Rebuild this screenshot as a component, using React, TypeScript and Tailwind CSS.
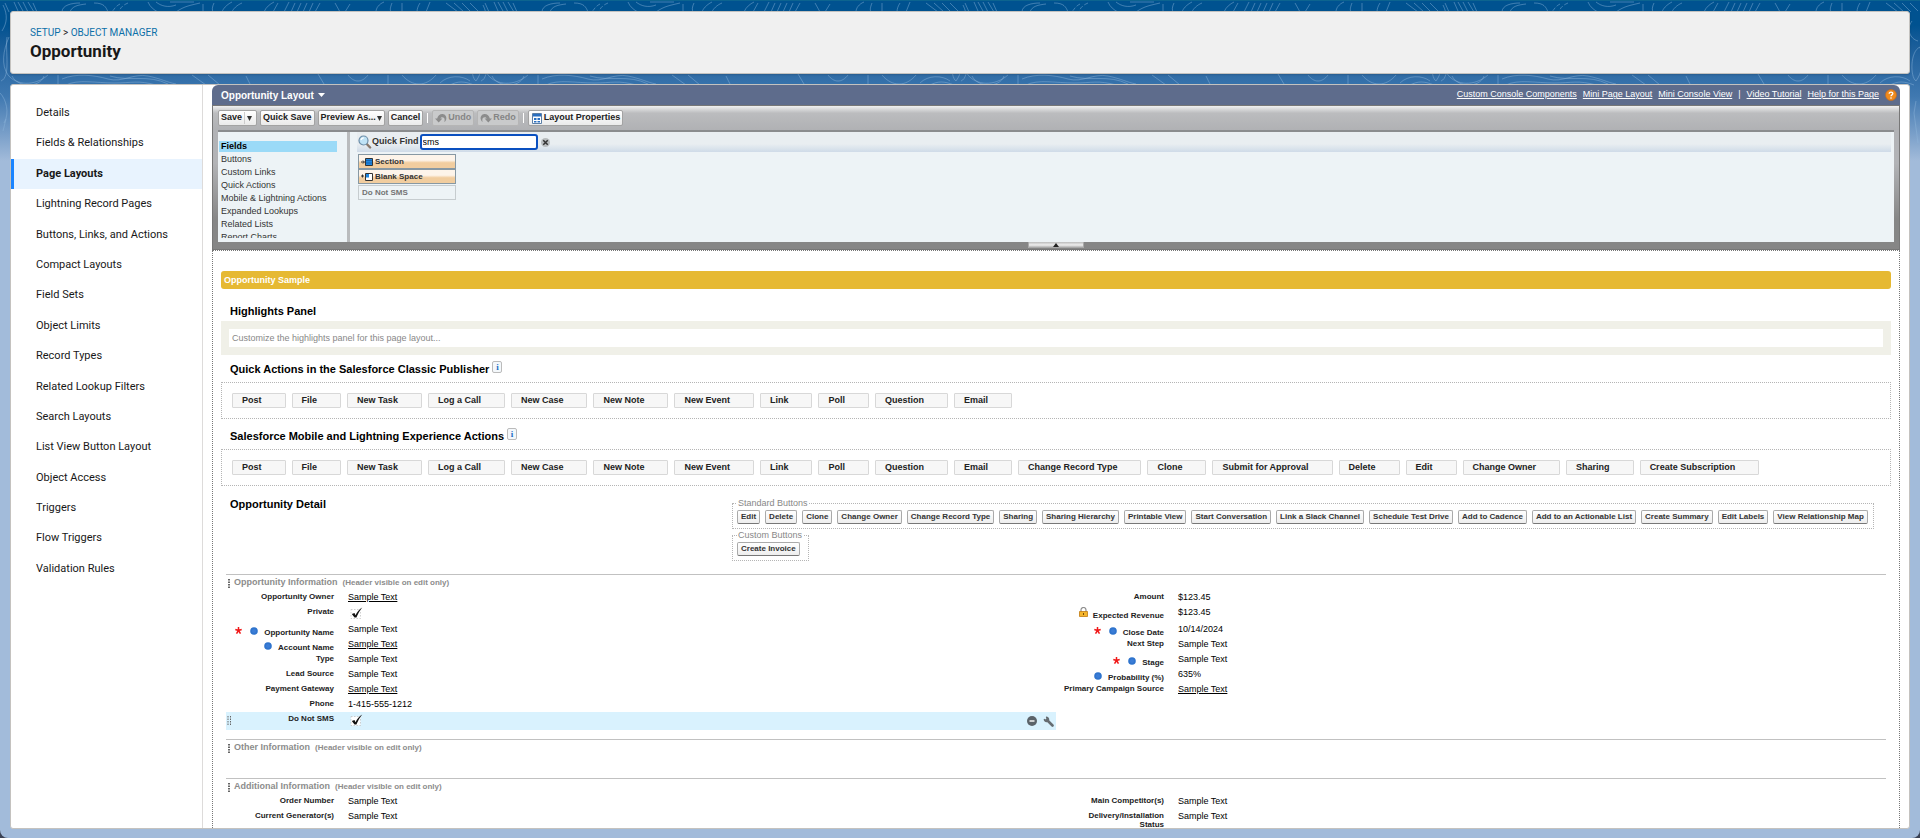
import { useState } from 'react';
import type { ReactNode } from 'react';
import { clsx } from 'clsx';

const NAV_ITEMS = [
  'Details',
  'Fields & Relationships',
  'Page Layouts',
  'Lightning Record Pages',
  'Buttons, Links, and Actions',
  'Compact Layouts',
  'Field Sets',
  'Object Limits',
  'Record Types',
  'Related Lookup Filters',
  'Search Layouts',
  'List View Button Layout',
  'Object Access',
  'Triggers',
  'Flow Triggers',
  'Validation Rules',
];

const CATEGORIES = [
  'Fields',
  'Buttons',
  'Custom Links',
  'Quick Actions',
  'Mobile & Lightning Actions',
  'Expanded Lookups',
  'Related Lists',
  'Report Charts',
];

const CLASSIC_ACTIONS = [
  'Post',
  'File',
  'New Task',
  'Log a Call',
  'New Case',
  'New Note',
  'New Event',
  'Link',
  'Poll',
  'Question',
  'Email',
];

const LIGHTNING_ACTIONS = [
  ...CLASSIC_ACTIONS,
  'Change Record Type',
  'Clone',
  'Submit for Approval',
  'Delete',
  'Edit',
  'Change Owner',
  'Sharing',
  'Create Subscription',
];

const STANDARD_BUTTONS = [
  'Edit',
  'Delete',
  'Clone',
  'Change Owner',
  'Change Record Type',
  'Sharing',
  'Sharing Hierarchy',
  'Printable View',
  'Start Conversation',
  'Link a Slack Channel',
  'Schedule Test Drive',
  'Add to Cadence',
  'Add to an Actionable List',
  'Create Summary',
  'Edit Labels',
  'View Relationship Map',
];

type Field = {
  label: string;
  value?: string;
  link?: boolean;
  check?: boolean;
  required?: boolean;
  always?: boolean;
  locked?: boolean;
  tall?: boolean;
  active?: boolean;
};

const INFO_LEFT: Field[] = [
  { label: 'Opportunity Owner', value: 'Sample Text', link: true },
  { label: 'Private', check: true, tall: true },
  { label: 'Opportunity Name', value: 'Sample Text', required: true, always: true },
  { label: 'Account Name', value: 'Sample Text', link: true, always: true },
  { label: 'Type', value: 'Sample Text' },
  { label: 'Lead Source', value: 'Sample Text' },
  { label: 'Payment Gateway', value: 'Sample Text', link: true },
  { label: 'Phone', value: '1-415-555-1212' },
  { label: 'Do Not SMS', check: true, active: true },
];

const INFO_RIGHT: Field[] = [
  { label: 'Amount', value: '$123.45' },
  { label: 'Expected Revenue', value: '$123.45', locked: true, tall: true },
  { label: 'Close Date', value: '10/14/2024', required: true, always: true },
  { label: 'Next Step', value: 'Sample Text' },
  { label: 'Stage', value: 'Sample Text', required: true, always: true },
  { label: 'Probability (%)', value: '635%', always: true },
  { label: 'Primary Campaign Source', value: 'Sample Text', link: true },
];

const EXTRA_LEFT: Field[] = [
  { label: 'Order Number', value: 'Sample Text' },
  { label: 'Current Generator(s)', value: 'Sample Text' },
];

const EXTRA_RIGHT: Field[] = [
  { label: 'Main Competitor(s)', value: 'Sample Text' },
  { label: 'Delivery/Installation Status', value: 'Sample Text' },
];

export default function App() {
  return (
    <div className="h-screen bg-[#3b4254]">
      <div className="relative flex h-full flex-col gap-[10px] overflow-hidden rounded-b-lg border-t border-[#0d648f] bg-[#a2bbda] px-[10px] pt-[10px] pb-[9px] font-['Liberation_Sans',Arial,sans-serif] text-black">
        <Backdrop />
        <PageHeader />
        <div className="relative flex min-h-0 flex-1 overflow-hidden rounded-[3px] border border-[#c4c2bf] bg-white">
          <SideNav />
          <div className="flex min-w-0 flex-1 flex-col px-[9px]">
            <Editor />
            <LayoutCanvas />
          </div>
        </div>
      </div>
    </div>
  );
}

// Contour-line strip behind the header, fading into the flat page blue
function Backdrop() {
  return (
    <div className="absolute inset-x-0 top-0 h-[160px] bg-linear-to-b from-[#005290] from-15% via-[#4079b1] via-60% to-[#a2bbda]">
      <svg className="h-full w-full" aria-hidden="true">
        <defs>
          <pattern id="contours" width="480" height="160" patternUnits="userSpaceOnUse">
            <g fill="none" stroke="#8fb6dd" strokeOpacity="0.45" strokeWidth="1">
              <path d="M5 2l4 9M14 1l4 9M18 1l5 9M23 1l5 10M28 1l6 10M33 2l4 9" />
              <path d="M62 11C62 4 72 2 80 2M70 11c2-6 8-7 16-8M94 2c10 0 12 4 14 9" />
              <path d="M120 3c-4 2-6 5-8 8M128 2c-5 2-8 5-9 9" strokeDasharray="4 2" />
              <path d="M148 1c2 5 6 8 10 10M156 1c5 4 12 6 20 3M170 1h24M176 11c8-6 16-7 24-9" />
              <path d="M203 3v8M214 2c-2 4-2 7-1 9M232 1c-6 3-9 7-10 10M242 2c-5 2-9 6-10 9" />
              <path d="M264 11c2-5 6-8 10-10M278 2l-5 9M289 1l-5 10M295 2l-4 9M301 2l-4 9M307 2l-4 9M313 2l-4 9M320 2l-5 9" />
              <path d="M335 2l5 9M350 3l-5 8M376 11c0-4 3-8 8-10M392 2c-2 5-2 7-1 9M402 2v9M420 2c-2 3-3 6-3 9M430 1l-4 10" />
              <path d="M446 2l12 9M454 2l10 9M462 2l9 9M470 2l8 8" />
              <path d="M2 30c5-8 6-16 1-26M1 80c10-4 4-30 6-44M9 36c-6 14-8 28-1 38 8 10 26 12 40 0" />
              <path d="M12 75c6 12 28 12 32 0M58 74v10" />
              <path d="M62 78c14-6 32-4 46 0s26-6 40-3 18 6 28 8M66 84c12-6 30-2 48-2s24-3 42 2M110 75c20 6 38-2 58 8" />
              <path d="M192 74l14 10M208 74l12 10M246 75l4 8M318 73l6 10M348 74c6 8 14 8 20 0M388 74v10" />
              <path d="M402 74c10 12 24 12 34 0M440 82c8-8 22-8 30-2M450 84c8-4 14-4 24 0" />
              <path d="M0 92c6 6 10 20 4 30M3 130l3-12M472 20c-6 8-2 18 6 20M480 46c-10 4-10 30-4 34 6-8 8-20 4-34M476 100l-2 12 4 30" />
            </g>
          </pattern>
        </defs>
        <rect width="100%" height="160" fill="url(#contours)" />
      </svg>
    </div>
  );
}

function PageHeader() {
  return (
    <header className="relative flex h-[63px] shrink-0 flex-col justify-center rounded-[3px] border border-[#c4c2bf] bg-[#f0f0f0] px-[19px] font-['Roboto','Liberation_Sans',sans-serif] shadow-[0_1px_2px_rgba(0,0,0,0.15)]">
      <nav className="text-[10px] leading-4 text-[#181818]">
        <a href="#setup" className="text-[#0b6fa8]">SETUP</a>
        {' > '}
        <a href="#object-manager" className="text-[#0b6fa8]">OBJECT MANAGER</a>
      </nav>
      <h1 className="text-[17px] leading-5 font-bold text-[#181818]">Opportunity</h1>
    </header>
  );
}

function SideNav() {
  return (
    <nav className="w-[192px] shrink-0 border-r border-[#dddbda] pt-[13px] font-['Roboto','Liberation_Sans',sans-serif] text-[11px] text-[#181818]">
      <ul className="flex h-[486px] flex-col justify-between">
        {NAV_ITEMS.map((item) => (
          <li key={item}>
            <a
              href="#nav"
              className={clsx(
                'block border-l-[3px] pl-[22px] leading-[30px]',
                item === 'Page Layouts' ? 'border-[#1b85ff] bg-[#e8f3fe] font-bold' : 'border-transparent',
              )}
            >
              {item}
            </a>
          </li>
        ))}
      </ul>
    </nav>
  );
}

function Editor() {
  return (
    <section className="shrink-0">
      <div className="flex h-5 items-center justify-between rounded-t-md bg-[#5e6c8c] pr-[3px] pl-[9px] text-white">
        <button type="button" className="flex items-center gap-1 text-[10px] font-bold">
          Opportunity Layout
          <svg width="7" height="4" viewBox="0 0 7 4" aria-hidden="true">
            <path d="M0 0h7L3.500 4z" fill="currentColor" />
          </svg>
        </button>
        <div className="flex items-center gap-[6px] text-[9px]">
          <a href="#console" className="underline">Custom Console Components</a>
          <a href="#mini-page" className="underline">Mini Page Layout</a>
          <a href="#mini-console" className="underline">Mini Console View</a>
          <span>|</span>
          <a href="#video" className="underline">Video Tutorial</a>
          <a href="#help" className="underline">Help for this Page</a>
          <svg width="12" height="12" viewBox="0 0 12 12" aria-hidden="true">
            <circle cx="6" cy="6" r="5.500" fill="#f08a1c" stroke="#c9691a" strokeWidth="0.600" />
            <path d="M4.200 4.700C4.200 2.500 7.900 2.600 7.800 4.700 7.700 5.900 6 5.900 6 7.200" fill="none" stroke="#fff" strokeWidth="1.300" />
            <circle cx="6" cy="9" r="0.800" fill="#fff" />
          </svg>
        </div>
      </div>

      <div className="border border-[#777] bg-linear-to-b from-[#b2b3b6] from-40% to-[#868686] to-80%">
        <Toolbar />
        <div className="mx-[5px] flex h-[112px] border-t-2 border-[#8a8c8e] bg-[#edf3f6]">
          <CategoryList />
          <Palette />
        </div>
        <div className="flex h-[7px] justify-center">
          <button
            type="button"
            aria-label="Collapse palette"
            className="flex h-[6px] w-[56px] items-center justify-center border-x border-[#aaa] bg-linear-to-b from-[#bbb] via-[#efefef] to-[#9a9a9a]"
          >
            <svg width="6" height="4" viewBox="0 0 6 4" aria-hidden="true">
              <path d="M3 0l3 4H0z" fill="#222" />
            </svg>
          </button>
        </div>
      </div>
    </section>
  );
}

function ToolButton({ children, disabled = false }: { children: ReactNode; disabled?: boolean }) {
  return (
    <button
      type="button"
      disabled={disabled}
      className={clsx(
        'flex h-4 items-center gap-px rounded-[2px] border px-[2px] text-[9px] font-bold',
        disabled
          ? 'border-[#b5b5b5] bg-[#c9cacb] text-[#858585]'
          : 'border-[#a3a3a3] bg-linear-to-b from-white to-[#eaeaea] text-[#222]',
      )}
    >
      {children}
    </button>
  );
}

function Caret() {
  return (
    <svg width="5" height="5" viewBox="0 0 5 5" aria-hidden="true">
      <path d="M0 0h5L2.500 5z" fill="#333" />
    </svg>
  );
}

function CurvedArrow({ flip = false }: { flip?: boolean }) {
  return (
    <svg width="12" height="10" viewBox="0 0 12 10" className={clsx(flip && '-scale-x-100')} aria-hidden="true">
      <path d="M0 5.500h2.200C2.600 2.500 5 .800 7.500.900c3 .200 4.500 3 3.700 5.600-.300 1-1 2-1.900 2.700.700-2.200.600-4.800-2-5-1.200 0-1.700.600-1.900 1.300h2L3.700 9.500z" fill="#8c8c8c" />
    </svg>
  );
}

function Toolbar() {
  return (
    <div className="flex h-6 items-center gap-[3px] bg-linear-to-b from-[#f0f0f0] via-[#bbbcbe] via-30% to-[#b0b1b4] px-[5px]">
      <ToolButton>
        Save
        <span className="ml-px flex h-3 items-center border-l border-[#ccc] px-[2px]">
          <Caret />
        </span>
      </ToolButton>
      <ToolButton>Quick Save</ToolButton>
      <ToolButton>
        Preview As...
        <Caret />
      </ToolButton>
      <ToolButton>Cancel</ToolButton>
      <span className="mx-px h-[10px] w-px bg-white" />
      <ToolButton disabled>
        <CurvedArrow />
        Undo
      </ToolButton>
      <ToolButton disabled>
        <CurvedArrow flip />
        Redo
      </ToolButton>
      <span className="mx-px h-[10px] w-px bg-white" />
      <ToolButton>
        <svg width="10" height="11" viewBox="0 0 10 11" className="mx-px" aria-hidden="true">
          <path d="M.500.500h9v10h-9z" fill="#fff" stroke="#5b7ea6" />
          <path d="M1 1h8v2.500H1z" fill="#2a6fc0" />
          <path d="M2 5h2.500v2H2zM5.500 5H8v2H5.500zM2 8h2.500v1.500H2zM5.500 8H8v1.500H5.500z" fill="#2a6fc0" />
        </svg>
        Layout Properties
      </ToolButton>
    </div>
  );
}

function CategoryList() {
  const [selected, setSelected] = useState('Fields');
  return (
    <div className="w-[132px] shrink-0 border-r-[3px] border-[#b9bbbd] pt-2 text-[9px] text-[#333]">
      <ul className="mr-[10px] ml-px h-[98px] overflow-hidden">
        {CATEGORIES.map((name) => (
          <li key={name} className="py-px">
            <button
              type="button"
              onClick={() => setSelected(name)}
              className={clsx(
                'block w-full pl-[2px] text-left leading-[11px]',
                name === selected && 'bg-[#9bdaf7] font-bold text-black',
              )}
            >
              {name}
            </button>
          </li>
        ))}
      </ul>
    </div>
  );
}

function Palette() {
  const [query, setQuery] = useState('sms');
  return (
    <div className="min-w-0 flex-1 pr-[3px] pl-[7px]">
      <div className="flex h-5 items-center bg-linear-to-b from-[#e9eef1] from-60% to-[#cfdbe8] pl-px">
        <svg width="14" height="14" viewBox="0 0 14 14" aria-hidden="true">
          <path d="M8.300 8.500l3.800 4" stroke="#8a7a6c" strokeWidth="2.400" strokeLinecap="round" />
          <circle cx="5.500" cy="5.500" r="4.500" fill="#bfe3f6" stroke="#6d8ea8" strokeWidth="1.200" />
          <path d="M3 5c.300-1.400 1.400-2.200 2.800-2.200" fill="none" stroke="#fff" strokeWidth="1.200" />
        </svg>
        <label htmlFor="quick-find" className="pr-px text-[9px] font-bold text-[#333]">
          Quick Find
        </label>
        <input
          id="quick-find"
          type="text"
          value={query}
          onChange={(e) => setQuery(e.target.value)}
          className="h-4 w-[118px] rounded-[3px] border-2 border-[#0a50c0] bg-white px-px text-[9px] text-black outline-none"
        />
        <button type="button" aria-label="Clear" onClick={() => setQuery('')} className="ml-[3px]">
          <svg width="9" height="9" viewBox="0 0 8 8" aria-hidden="true">
            <circle cx="4" cy="4" r="4" fill="#b8bcbe" />
            <path d="M2 2l4 4M6 2L2 6" stroke="#333" strokeWidth="1.300" />
          </svg>
        </button>
      </div>
      <ul className="mt-[2px] ml-px flex w-[98px] flex-col text-[8px] font-bold text-[#333]">
        <li className="flex h-[15px] items-center gap-[2px] border border-[#8798a3] bg-linear-to-b from-[#fdf4ea] from-40% to-[#f1cd9f] to-60% pl-[2px]">
          <svg width="12" height="8" viewBox="0 0 12 8" aria-hidden="true">
            <path d="M0 4h3M2 2.500L3.500 4 2 5.500" fill="none" stroke="#333" />
            <path d="M4.500.500h7v7h-7z" fill="#1f86e0" stroke="#333" />
            <path d="M5 2.500h6M5 5h6" stroke="#0d4f94" strokeWidth="0.600" />
          </svg>
          Section
        </li>
        <li className="flex h-[15px] items-center gap-[2px] border border-[#8798a3] bg-linear-to-b from-[#fdf4ea] from-40% to-[#f1cd9f] to-60% pl-[2px]">
          <svg width="12" height="8" viewBox="0 0 12 8" aria-hidden="true">
            <path d="M0 3h3M1.500 1.500v3" fill="none" stroke="#333" />
            <path d="M4.500.500h7v7h-7z" fill="#fff" stroke="#333" />
            <path d="M5 1h3v3.500H5z" fill="#1f86e0" />
          </svg>
          Blank Space
        </li>
        <li className="mt-px flex h-[15px] items-center border border-[#c6cccf] pl-[3px] text-[#747474]">
          Do Not SMS
        </li>
      </ul>
    </div>
  );
}

function LayoutCanvas() {
  return (
    <main className="flex min-h-0 flex-1 flex-col overflow-hidden border-x border-t border-dotted border-[#777] px-2 pt-5">
      <h2 className="h-[18px] shrink-0 rounded-[3px] bg-[#e6b933] pl-[3px] text-[9px] leading-[18px] font-bold text-white">
        Opportunity Sample
      </h2>

      <h3 className="mt-[14px] mb-[2px] pl-[9px] text-[11px] leading-4 font-bold">Highlights Panel</h3>
      <div className="shrink-0 bg-[#f0f0e8] p-2">
        <p className="bg-white pl-[3px] text-[9px] leading-[18px] text-[#888]">
          Customize the highlights panel for this page layout...
        </p>
      </div>

      <ActionSection title="Quick Actions in the Salesforce Classic Publisher" actions={CLASSIC_ACTIONS} />
      <ActionSection title="Salesforce Mobile and Lightning Experience Actions" actions={LIGHTNING_ACTIONS} />

      <div className="flex h-[85px] shrink-0 items-start pt-2">
        <h3 className="w-[511px] shrink-0 pl-[9px] text-[11px] leading-[14px] font-bold">Opportunity Detail</h3>
        <div className="flex flex-col items-start">
          <ButtonGroup title="Standard Buttons" buttons={STANDARD_BUTTONS} />
          <ButtonGroup title="Custom Buttons" buttons={['Create Invoice']} />
        </div>
      </div>

      <div className="px-[5px]">
        <FieldSection title="Opportunity Information" left={INFO_LEFT} right={INFO_RIGHT} />
        <FieldSection title="Other Information" left={[]} right={[]} />
        <FieldSection title="Additional Information" left={EXTRA_LEFT} right={EXTRA_RIGHT} />
      </div>
    </main>
  );
}

function ActionSection({ title, actions }: { title: string; actions: string[] }) {
  return (
    <section className="shrink-0">
      <h3 className="flex h-[27px] items-center gap-[3px] pt-[2px] pl-[9px] text-[11px] font-bold">
        {title}
        <button
          type="button"
          aria-label="Info"
          className="mb-[6px] h-3 w-[10px] rounded-[2px] border border-[#bbb] bg-[#f4f8fb] font-['Liberation_Serif',serif] text-[9px] leading-[10px] font-bold text-[#1c6ec4]"
        >
          i
        </button>
      </h3>
      <ul className="mb-[3px] flex h-[37px] items-center gap-[6px] border border-dotted border-[#b5b5b5] px-[10px] text-[9px] font-bold text-[#222]">
        {actions.map((action) => (
          <li
            key={action}
            className="cursor-move rounded-[1px] border border-[#d8d8d8] bg-[#f7f7f7] pr-[23px] pl-[9px] leading-[13px] whitespace-nowrap"
          >
            {action}
          </li>
        ))}
      </ul>
    </section>
  );
}

function ButtonGroup({ title, buttons }: { title: string; buttons: string[] }) {
  return (
    <fieldset className="h-8 border border-dotted border-[#b5b5b5] pr-[5px] pl-1">
      <legend className="px-px text-[9px] leading-3 text-[#888]">{title}</legend>
      <div className="flex gap-[5px] pt-px">
        {buttons.map((name) => (
          <button
            key={name}
            type="button"
            className="h-[14px] rounded-[2px] border border-[#aaa] border-b-[#777] bg-linear-to-b from-white to-[#eee] px-[3px] text-[8px] leading-3 font-bold whitespace-nowrap text-[#333]"
          >
            {name}
          </button>
        ))}
      </div>
    </fieldset>
  );
}

function FieldSection({ title, left, right }: { title: string; left: Field[]; right: Field[] }) {
  return (
    <section className="mb-[9px] border-t border-[#c1c1c1]">
      <h4 className="flex h-[15px] items-center gap-[2px] pt-px pl-[2px] text-[9px] font-bold text-[#8c8c8c]">
        <Grip />
        {title}
        <span className="pl-[3px] text-[8px]">(Header visible on edit only)</span>
      </h4>
      {left.length > 0 ? (
        <div className="grid grid-cols-2">
          <dl>
            {left.map((field) => (
              <FieldRow key={field.label} field={field} />
            ))}
          </dl>
          <dl>
            {right.map((field) => (
              <FieldRow key={field.label} field={field} />
            ))}
          </dl>
        </div>
      ) : (
        <div className="h-[14px]" />
      )}
    </section>
  );
}

function Grip({ double = false }: { double?: boolean }) {
  return (
    <svg width="4" height="9" viewBox="0 0 4 9" aria-hidden="true">
      <path d="M1 0v9" stroke="#666" strokeWidth={double ? 1 : 2} strokeDasharray="1.500 1" />
      {double ? <path d="M3.500 0v9" stroke="#666" strokeDasharray="1.500 1" /> : null}
    </svg>
  );
}

function FieldRow({ field }: { field: Field }) {
  const hasIcon = field.required || field.always || field.locked;
  return (
    <div
      className={clsx(
        'relative flex items-start gap-[14px] text-[9px]',
        field.active ? 'h-[18px] bg-[#d9f2fe]' : field.tall ? 'h-[17px]' : 'h-[15px]',
      )}
    >
      {field.active ? (
        <span className="absolute top-1 left-px">
          <Grip double />
        </span>
      ) : null}
      <dt
        className={clsx(
          'flex w-[108px] shrink-0 items-start justify-end pl-[7px] text-right text-[8px] leading-[9px] font-bold text-[#222]',
          hasIcon ? 'pt-[6px]' : 'pt-[2px]',
        )}
      >
        {field.required ? (
          <svg width="7" height="7" viewBox="0 0 7 7" className="-mt-px mr-2 shrink-0" aria-label="Required">
            <path d="M3.500 0v3.500M3.500 3.500L.300 2.500M3.500 3.500l3.200-1M3.500 3.500L1.500 6.600M3.500 3.500l2 3.100" stroke="#f01818" strokeWidth="1.500" />
          </svg>
        ) : null}
        {field.always ? (
          <svg width="8" height="8" viewBox="0 0 8 8" className="-mt-px mr-[6px] shrink-0" aria-label="Always on layout">
            <circle cx="4" cy="4" r="3.800" fill="#2f74cd" />
            <circle cx="4" cy="4" r="2" fill="#3b7dd6" />
          </svg>
        ) : null}
        {field.locked ? (
          <svg width="9" height="10" viewBox="0 0 9 10" className="-mt-1 mr-[5px] shrink-0" aria-label="Read only">
            <path d="M2 5V3a2.500 2.500 0 0 1 5 0v2" fill="none" stroke="#8f8f8f" strokeWidth="1.200" />
            <path d="M.500 4.500h8v5h-8z" fill="#f5b52c" stroke="#c07a10" strokeWidth="0.800" />
            <path d="M4.500 6v2" stroke="#7a4a08" />
          </svg>
        ) : null}
        <span>{field.label}</span>
      </dt>
      <dd className="leading-[15px] text-black">
        {field.check ? (
          <svg width="13" height="13" viewBox="0 0 13 13" className="mt-[2px] ml-[2px]" aria-label="Checked">
            <path d="M1 2.500h9.500v9H1z" fill="#fff" stroke="#bbb" strokeWidth="0.700" strokeDasharray="1.500 1.500" />
            <path d="M1.800 7l2.700-1 1 2.200C7 5 9 2.500 12.300.500 9.800 3.500 7.800 7 6.400 10.500H4.500z" fill="#111" />
          </svg>
        ) : field.link ? (
          <a href="#sample" className="underline">{field.value}</a>
        ) : (
          field.value
        )}
      </dd>
      {field.active ? (
        <div className="ml-auto flex items-center gap-[6px] self-center pr-[2px]">
          <button type="button" aria-label="Remove">
            <svg width="10" height="10" viewBox="0 0 10 10" aria-hidden="true">
              <circle cx="5" cy="5" r="5" fill="#5b6369" />
              <path d="M2.500 5h5" stroke="#fff" strokeWidth="1.400" />
            </svg>
          </button>
          <button type="button" aria-label="Properties">
            <svg width="11" height="11" viewBox="0 0 11 11" aria-hidden="true">
              <path d="M4.500 4.500l5 5" stroke="#666d72" strokeWidth="2.600" strokeLinecap="round" />
              <path d="M3 .500l-.200 2L.700 3C.500 5 2 6.400 4 6.200 6 6 6.600 4.200 6.100 2.500 5.600 1.200 4.500.400 3 .500z" fill="#666d72" />
              <path d="M1 1l2 2" stroke="#d9f2fe" strokeWidth="1.200" />
            </svg>
          </button>
        </div>
      ) : null}
    </div>
  );
}
